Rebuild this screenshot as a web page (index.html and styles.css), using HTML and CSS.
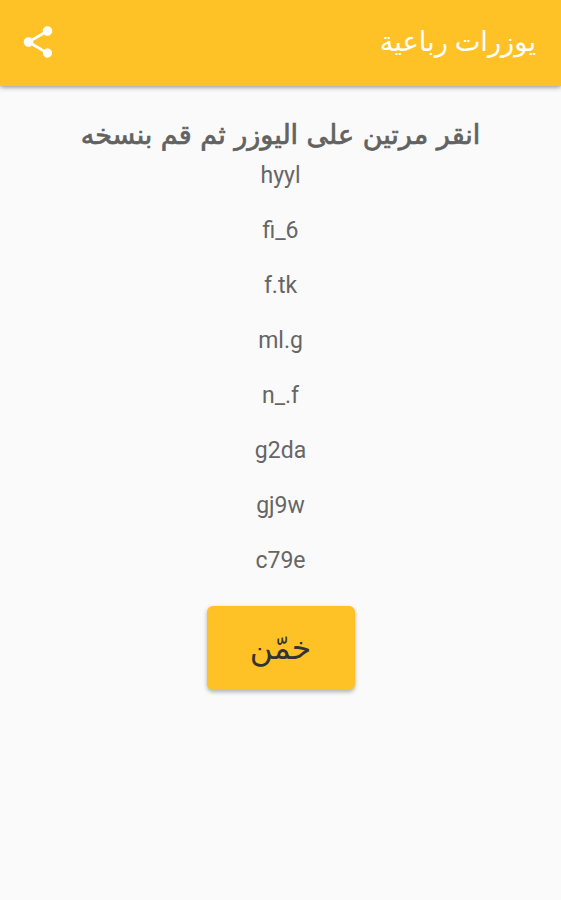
FILE: index.html
```html
<!DOCTYPE html>
<html lang="ar" dir="rtl">
<head>
<meta charset="utf-8">
<title>يوزرات رباعية</title>
<link rel="stylesheet" href="styles.css">
</head>
<body>
<header class="bar">
  <h1 class="title">يوزرات رباعية</h1>
  <svg class="share" viewBox="0 0 24 24"><path d="M18 16.08c-.76 0-1.44.3-1.96.77L8.91 12.7c.05-.23.09-.46.09-.7s-.04-.47-.09-.7l7.05-4.11c.54.5 1.25.81 2.04.81 1.66 0 3-1.34 3-3s-1.34-3-3-3-3 1.34-3 3c0 .24.04.47.09.7L8.04 9.81C7.5 9.31 6.79 9 6 9c-1.66 0-3 1.34-3 3s1.34 3 3 3c.79 0 1.5-.31 2.04-.81l7.12 4.16c-.05.21-.08.43-.08.65 0 1.61 1.31 2.92 2.92 2.92s2.92-1.31 2.92-2.92-1.31-2.92-2.92-2.92z"/></svg>
</header>
<main class="content">
  <h2 class="hint">انقر مرتين على اليوزر ثم قم بنسخه</h2>
  <ul class="users" dir="ltr">
    <li>hyyl</li>
    <li>fi_6</li>
    <li>f.tk</li>
    <li>ml.g</li>
    <li>n_.f</li>
    <li>g2da</li>
    <li>gj9w</li>
    <li>c79e</li>
  </ul>
  <button class="guess">خمّن</button>
</main>
</body>
</html>
```

FILE: styles.css
```css
* { box-sizing: border-box; }
body {
  margin: 0;
  min-height: 900px;
  background: #fafafa;
  color: #666;
  font-family: Roboto, "DejaVu Sans", sans-serif;
}
.bar {
  display: flex;
  align-items: center;
  justify-content: space-between;
  height: 86px;
  padding: 0 25px 2px 19px;
  background: #ffc226;
  box-shadow: 0 1px 5px rgba(0, 0, 0, .45);
}
.title {
  margin: 0;
  color: #fff;
  font-size: 27.3px;
  font-weight: 400;
  line-height: 40px;
}
.share { width: 38px; height: 38px; fill: #fff; }
.content {
  display: flex;
  flex-direction: column;
  align-items: center;
  padding-top: 26px;
}
.hint {
  margin: 0;
  height: 36px;
  color: #626262;
  font-size: 27px;
  font-weight: 400;
  line-height: 47px;
  white-space: nowrap;
  word-spacing: 1.8px;
  -webkit-text-stroke: .7px currentColor;
}
.users {
  margin: 0;
  padding: 0;
  list-style: none;
  text-align: center;
  font-size: 23px;
}
.users li { height: 55px; line-height: 55px; }
.guess {
  width: 148px;
  height: 84px;
  margin-top: 18px;
  border: 0;
  border-radius: 6px;
  background: #ffc226;
  box-shadow: 0 2px 4px rgba(0, 0, 0, .3);
  color: #333;
  font-family: inherit;
  font-size: 31.5px;
}
```
